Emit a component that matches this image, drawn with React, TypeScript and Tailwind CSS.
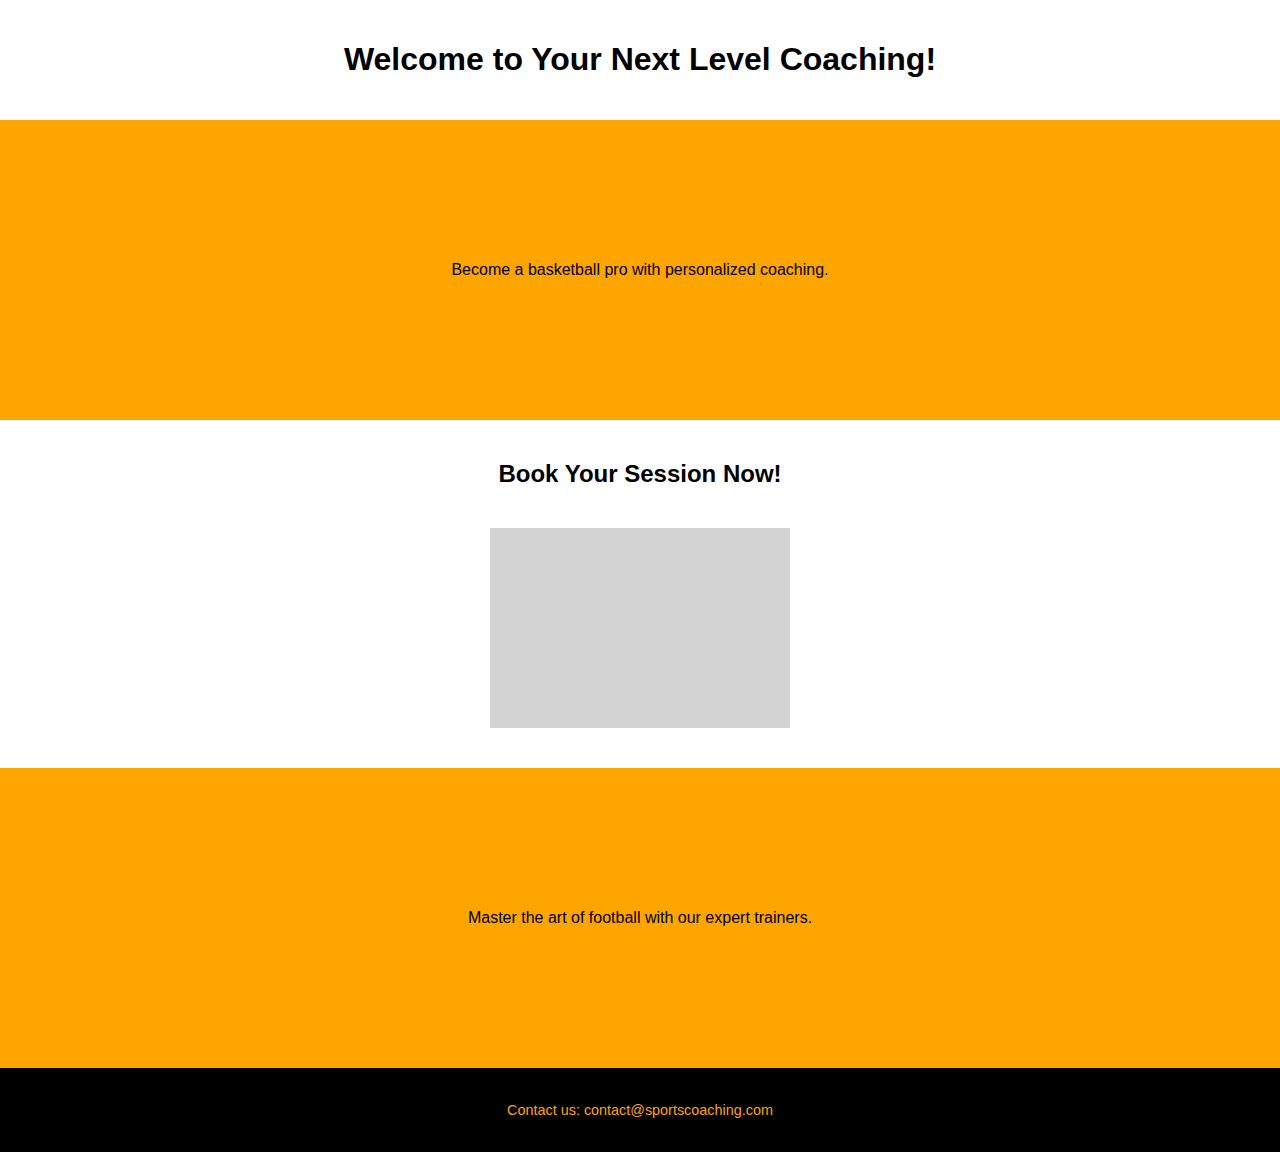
export default function App() {
  return (
    <div className="min-h-screen bg-white text-black font-['Liberation_Sans',Arial,sans-serif]">
      <header className="p-5 text-center">
        <h1 className="my-[21.44px] text-[32px] leading-[37px] font-bold">
          Welcome to Your Next Level Coaching!
        </h1>
      </header>

      <section className="flex h-[300px] items-center justify-center bg-[#FFA500]">
        <p className="text-base leading-[18px]">Become a basketball pro with personalized coaching.</p>
      </section>

      <section className="flex flex-col items-center p-5">
        <h2 className="my-5 text-2xl leading-7 font-bold">Book Your Session Now!</h2>
        <div className="my-5 h-[200px] w-[300px] bg-[#D3D3D3]" />
      </section>

      <section className="flex h-[300px] items-center justify-center bg-[#FFA500]">
        <p className="text-base leading-[18px]">Master the art of football with our expert trainers.</p>
      </section>

      <footer className="bg-black p-5 text-center">
        <p className="my-[14px] text-[14.4px] leading-4 text-[#FFA500]">
          Contact us: contact@sportscoaching.com
        </p>
      </footer>
    </div>
  );
}
